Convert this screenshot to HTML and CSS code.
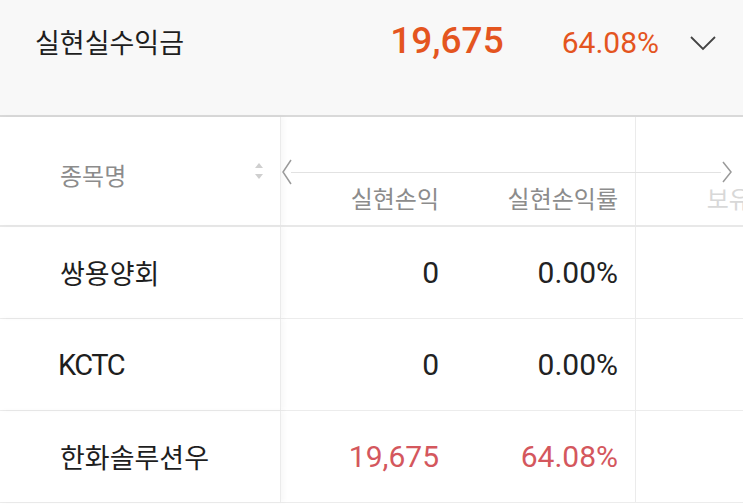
FILE: index.html
```html
<!DOCTYPE html>
<html lang="ko">

<head>
    <meta charset="UTF-8">
    <meta name="viewport" content="width=device-width, initial-scale=1.0">
    <title>실현손익</title>
    <link rel="stylesheet" href="styles.css">
</head>

<body>
    <div class="summary">
        <span class="summary-label">실현실수익금</span>
        <span class="summary-amount">19,675</span>
        <span class="summary-rate">64.08%</span>
        <svg class="summary-toggle" width="26" height="16" viewBox="0 0 26 16">
            <polyline points="1,2 13,14 25,2" fill="none" stroke="#444" stroke-width="1.8" />
        </svg>
    </div>

    <div class="sheet">
        <div class="row head">
            <div class="cell name">
                <span>종목명</span>
                <svg class="sort" width="10" height="18" viewBox="0 0 10 18">
                    <polygon points="5,1 9,6 1,6" fill="#cfcfcf" />
                    <polygon points="1,12 9,12 5,17" fill="#cfcfcf" />
                </svg>
            </div>
            <div class="cell num">실현손익</div>
            <div class="cell num">실현손익률</div>
            <div class="cell num faded">보유수량</div>

            <div class="scroll-nav">
                <svg width="12" height="26" viewBox="0 0 12 26">
                    <polyline points="10,1 2,13 10,25" fill="none" stroke="#9a9a9a" stroke-width="1.5" />
                </svg>
                <div class="scroll-line"></div>
                <svg width="12" height="22" viewBox="0 0 12 22">
                    <polyline points="2,1 10,11 2,21" fill="none" stroke="#9a9a9a" stroke-width="1.5" />
                </svg>
            </div>
        </div>

        <div class="row">
            <div class="cell name">쌍용양회</div>
            <div class="cell num">0</div>
            <div class="cell num">0.00%</div>
            <div class="cell"></div>
        </div>
        <div class="row">
            <div class="cell name latin">KCTC</div>
            <div class="cell num">0</div>
            <div class="cell num">0.00%</div>
            <div class="cell"></div>
        </div>
        <div class="row">
            <div class="cell name">한화솔루션우</div>
            <div class="cell num up">19,675</div>
            <div class="cell num up">64.08%</div>
            <div class="cell"></div>
        </div>
    </div>
</body>

</html>
```

FILE: styles.css
```css
body {
    margin: 0;
    width: 743px;
    height: 504px;
    overflow: hidden;
    background-color: #fff;
    font-family: Roboto, "Noto Sans CJK KR", sans-serif;
    color: #222;
}

.summary {
    height: 117px;
    box-sizing: border-box;
    padding: 19px 0 0 35px;
    display: flex;
    align-items: baseline;
    background-color: #f8f8f8;
    border-bottom: 2px solid #d9d9d9;
}

.summary-label {
    font-family: "Noto Sans CJK KR", sans-serif;
    font-size: 27px;
    color: #1e1e1e;
}

.summary-amount {
    margin-left: auto;
    font-size: 37px;
    font-weight: 500;
    color: #e4551f;
}

.summary-rate {
    margin-left: 58px;
    font-size: 30px;
    color: #e4551f;
}

.summary-toggle {
    margin: 0 27px 0 31px;
    align-self: flex-start;
    margin-top: 16px;
}

.sheet {
    width: 814px;
}

.row {
    display: grid;
    grid-template-columns: 281px 177px 178px 178px;
    height: 91px;
    border-bottom: 1px solid #ececec;
}

.row.head {
    position: relative;
    height: 108px;
    border-bottom: 2px solid #e8e8e8;
}

.cell {
    display: flex;
    align-items: center;
    font-size: 30px;
}

.cell.name,
.cell:nth-child(3) {
    border-right: 1px solid #ebebeb;
}

.cell.name {
    padding-left: 60px;
    font-family: "Noto Sans CJK KR", sans-serif;
    font-size: 27px;
    color: #1e1e1e;
    box-shadow: 3px 0 5px rgba(0, 0, 0, 0.03);
}

.cell.name.latin {
    font-family: Roboto, sans-serif;
    font-size: 29px;
    letter-spacing: -1.5px;
    padding-left: 58px;
}

.cell.num {
    justify-content: flex-end;
    padding-right: 19px;
}

.cell.num:nth-child(3) {
    padding-right: 17px;
}

.cell.up {
    color: #d4575d;
}

.head .cell {
    font-family: "Noto Sans CJK KR", sans-serif;
    font-size: 24px;
    color: #8c8c8c;
}

.head .cell.name {
    padding-top: 6px;
    padding-right: 16px;
    justify-content: space-between;
    font-size: 24px;
}

.head .cell.num {
    align-items: flex-end;
    padding-bottom: 10px;
}

.head .cell.faded {
    color: #d8d8d8;
}

.sort {
    margin-top: -6px;
}

.scroll-nav {
    position: absolute;
    left: 281px;
    top: 42px;
    width: 452px;
    display: flex;
    align-items: center;
}

.scroll-line {
    flex: 1;
    height: 1px;
    background-color: #e2e2e2;
    margin-left: -2px;
}
```
